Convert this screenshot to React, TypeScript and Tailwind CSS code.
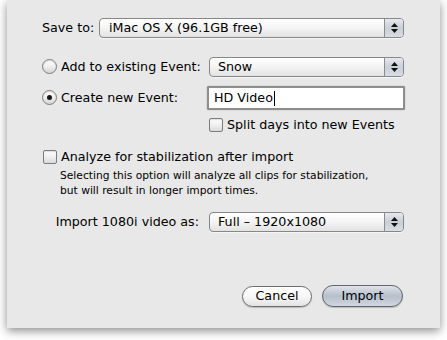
import React from "react";

const font = { fontFamily: '"DejaVu Sans", "Liberation Sans", sans-serif' };

const Stepper = () => (
  <div className="flex h-full w-[19px] flex-col items-center justify-center gap-[2px] border-l border-[#8c8c8c] bg-gradient-to-b from-[#e6e9ee] via-[#c9cfd8] to-[#d9dde4]">
    <svg width="7" height="4" viewBox="0 0 7 4">
      <path d="M3.5 0 L7 4 L0 4 Z" fill="#111" />
    </svg>
    <svg width="7" height="4" viewBox="0 0 7 4">
      <path d="M0 0 L7 0 L3.5 4 Z" fill="#111" />
    </svg>
  </div>
);

const Popup = ({ label, pad = "pl-[8px]" }: { label: string; pad?: string }) => (
  <div className="flex h-[20px] flex-1 items-center overflow-hidden rounded-[4px] border border-[#878787] bg-gradient-to-b from-[#ffffff] via-[#f4f4f4] to-[#e2e2e2] shadow-[0_1px_0_rgba(255,255,255,0.6)]">
    <span className={`flex-1 ${pad} text-[12.7px] leading-none text-black`}>{label}</span>
    <Stepper />
  </div>
);

const Radio = ({ on }: { on?: boolean }) => (
  <div className="flex h-[15px] w-[15px] items-center justify-center rounded-full border border-[#7d7d7d] bg-gradient-to-b from-[#fdfdfd] via-[#efefef] to-[#d4d4d4] shadow-[inset_0_1px_1px_rgba(0,0,0,0.15)]">
    {on && <div className="h-[5px] w-[5px] rounded-full bg-[#151515]" />}
  </div>
);

const Check = () => (
  <div className="h-[14px] w-[14px] rounded-[2px] border border-[#7d7d7d] bg-gradient-to-b from-[#fdfdfd] via-[#f0f0f0] to-[#dadada] shadow-[inset_0_1px_1px_rgba(0,0,0,0.12)]" />
);

export default function App() {
  return (
    <div className="h-[340px] w-[447px] overflow-hidden bg-white" style={font}>
      <div className="ml-[7px] h-[328px] w-[433px] bg-[#e8e8e8] pt-[18px] text-black shadow-[0_3px_9px_rgba(0,0,0,0.45)]">
        {/* save to */}
        <div className="flex h-[20px] items-center pl-[35px] pr-[36px]">
          <span className="w-[57px] text-[12.7px]">Save to:</span>
          <Popup label="iMac OS X (96.1GB free)" pad="pl-[9px]" />
        </div>

        {/* add to existing */}
        <div className="mt-[19px] flex h-[20px] items-center pl-[35px] pr-[36px]">
          <div className="flex w-[167px] items-center gap-[4px]">
            <Radio />
            <span className="text-[12.7px]">Add to existing Event:</span>
          </div>
          <Popup label="Snow" />
        </div>

        {/* create new */}
        <div className="mt-[9px] flex h-[24px] items-center pl-[35px] pr-[35px]">
          <div className="flex w-[165px] items-center gap-[4px]">
            <Radio on />
            <span className="text-[12.7px]">Create new Event:</span>
          </div>
          <div className="flex h-[24px] flex-1 items-center rounded-[2px] border-[2px] border-[#8e8e8e] bg-white pl-[5px] shadow-[0_0_1px_#5a5a5a]">
            <span className="text-[12.7px] leading-none">HD Video</span>
            <span className="ml-[1px] h-[15px] w-[1px] bg-black" />
          </div>
        </div>

        {/* split */}
        <div className="mt-[8px] flex h-[14px] items-center gap-[4px] pl-[202px]">
          <Check />
          <span className="text-[12.7px]">Split days into new Events</span>
        </div>

        {/* analyze */}
        <div className="mt-[17px] flex h-[15px] items-center gap-[4px] pl-[36px]">
          <Check />
          <span className="text-[12.7px]">Analyze for stabilization after import</span>
        </div>
        <p className="mt-[4px] pl-[53px] text-[10.7px] leading-[15px]">
          Selecting this option will analyze all clips for stabilization,
          <br />
          but will result in longer import times.
        </p>

        {/* import as */}
        <div className="mt-[14px] flex h-[20px] items-center pl-[35px] pr-[36px]">
          <span className="w-[167px] pr-[10px] text-right text-[12.7px]">Import 1080i video as:</span>
          <Popup label="Full – 1920x1080" />
        </div>

        {/* buttons */}
        <div className="mt-[53px] flex items-center justify-end gap-[10px] pr-[37px]">
          <button className="flex h-[21px] w-[70px] items-center justify-center rounded-full border border-[#6d6d6d] bg-gradient-to-b from-[#ffffff] via-[#f7f7f7] to-[#e3e3e3] text-[12.7px] leading-none shadow-[0_1px_1px_rgba(0,0,0,0.2)]">
            Cancel
          </button>
          <button className="flex h-[22px] w-[81px] items-center justify-center rounded-full border border-[#5f6470] bg-gradient-to-b from-[#dfe3ea] via-[#b7bfcb] to-[#d2d7df] text-[12.7px] leading-none shadow-[0_1px_1px_rgba(0,0,0,0.2)]">
            Import
          </button>
        </div>
      </div>
    </div>
  );
}
